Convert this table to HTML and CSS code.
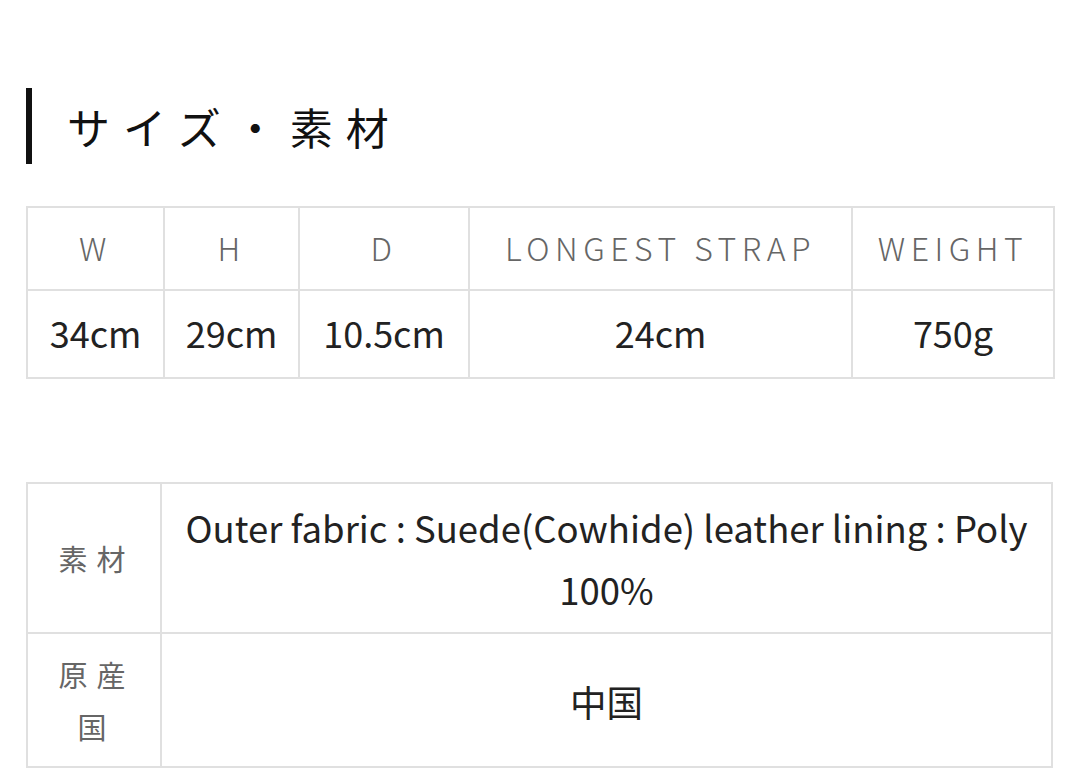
FILE: index.html
```html
<!DOCTYPE html>
<html lang="ja">
<head>
<meta charset="utf-8">
<link rel="stylesheet" href="styles.css">
</head>
<body>
<div class="page">
  <h2 class="title">サイズ・素材</h2>
  <table class="size-table">
    <colgroup>
      <col class="c1"><col class="c2"><col class="c3"><col class="c4"><col class="c5">
    </colgroup>
    <tr class="head">
      <th>W</th><th>H</th><th>D</th><th>LONGEST STRAP</th><th>WEIGHT</th>
    </tr>
    <tr class="vals">
      <td>34cm</td><td>29cm</td><td>10.5cm</td><td>24cm</td><td>750g</td>
    </tr>
  </table>
  <table class="mat-table">
    <colgroup><col class="m1"><col class="m2"></colgroup>
    <tr class="mat-row">
      <th>素材</th>
      <td>Outer fabric : Suede(Cowhide) leather lining : Poly 100%</td>
    </tr>
    <tr class="origin-row">
      <th>原産国</th>
      <td>中国</td>
    </tr>
  </table>
</div>
</body>
</html>
```
FILE: styles.css
```css
html, body {
  margin: 0;
  padding: 0;
  background: #fff;
}
body {
  font-family: "Noto Sans CJK JP", "Noto Sans", sans-serif;
  color: #222;
}
.page {
  padding: 88px 27px 0 26px;
}
.title {
  margin: 0;
  height: 76px;
  border-left: 6px solid #111;
  padding-left: 35px;
  display: flex;
  align-items: center;
  font-size: 43px;
  font-weight: 400;
  letter-spacing: 13px;
  color: #111;
  line-height: 1;
}
table {
  width: 100%;
  border-collapse: collapse;
  table-layout: fixed;
}
th, td {
  border: 2px solid #e0e0e0;
  text-align: center;
  padding: 0;
}
.size-table {
  margin-top: 42px;
}
.c1 { width: 137px; }
.c2 { width: 135px; }
.c3 { width: 170px; }
.c4 { width: 383px; }
.c5 { width: 202px; }
.head th {
  height: 77px;
  font-weight: 300;
  font-size: 32px;
  color: #666;
  letter-spacing: 5.5px;
  padding: 0 0 4px 0;
}
.vals td {
  height: 82px;
  font-size: 36px;
  color: #222;
  padding-bottom: 4px;
}
.mat-table {
  margin-top: 103px;
}
.m1 { width: 134px; }
.mat-table th {
  font-weight: 400;
  font-size: 29px;
  color: #666;
  letter-spacing: 9px;
  line-height: 52px;
  padding: 14px 14px 14px 19px;
}
.mat-table td {
  font-size: 36.5px;
  line-height: 62px;
  color: #222;
  padding: 13px 10px 11px;
}
.origin-row td {
  padding: 4px 10px 0;
}
```
